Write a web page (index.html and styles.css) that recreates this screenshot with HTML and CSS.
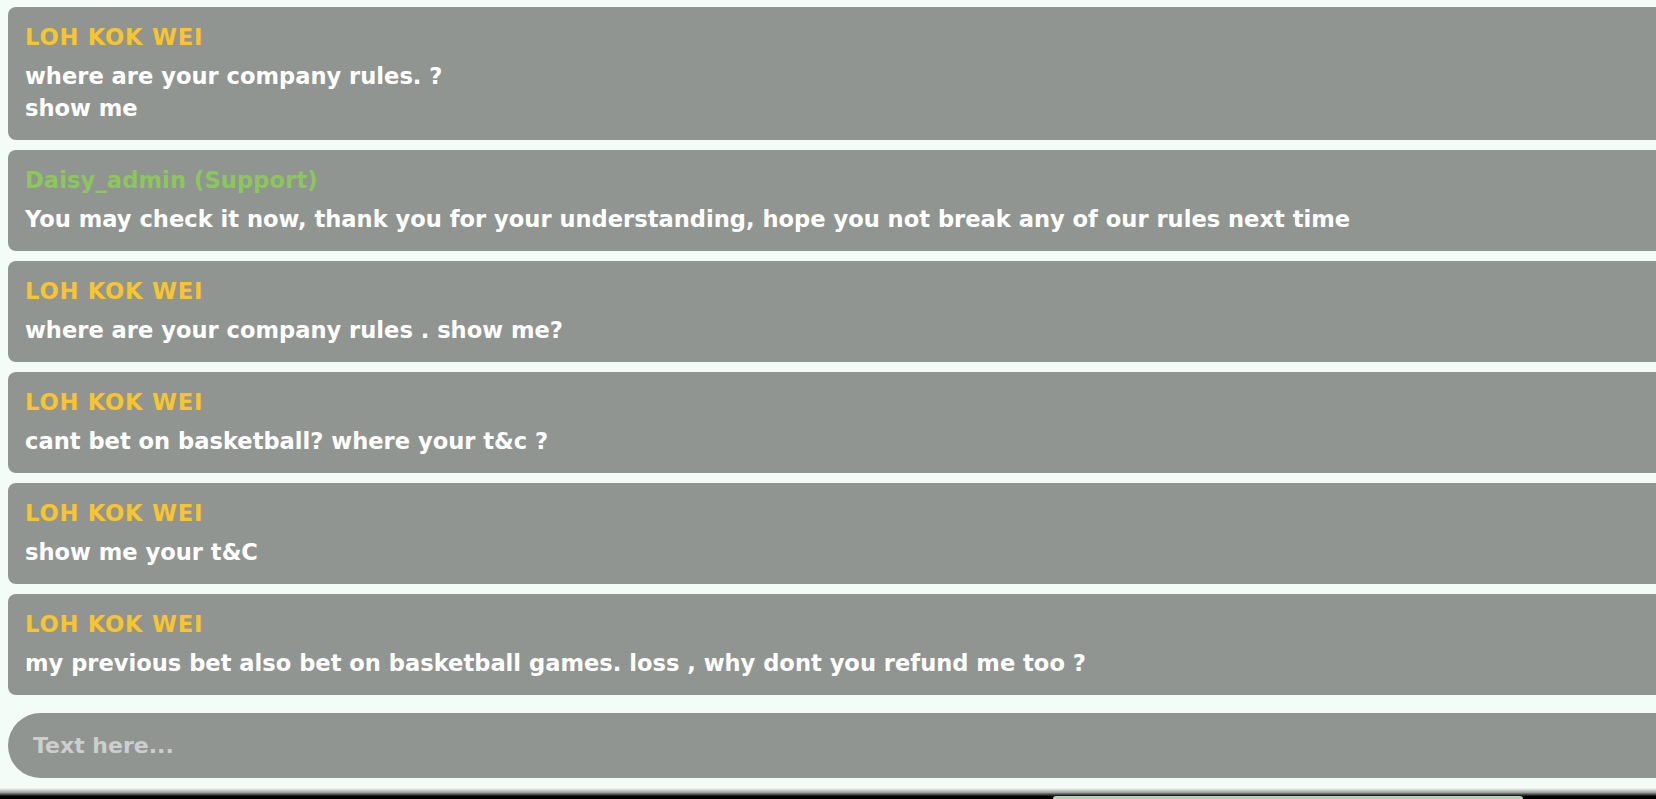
FILE: index.html
```html
<!DOCTYPE html>
<html lang="en">
<head>
<meta charset="utf-8">
<title>Chat</title>
<link rel="stylesheet" href="styles.css">
</head>
<body>
<div class="page">
  <div class="chat">
    <div class="msg">
      <div class="name user">LOH KOK WEI</div>
      <div class="text">where are your company rules. ?<br>show me</div>
    </div>
    <div class="msg">
      <div class="name admin">Daisy_admin (Support)</div>
      <div class="text">You may check it now, thank you for your understanding, hope you not break any of our rules next time</div>
    </div>
    <div class="msg">
      <div class="name user">LOH KOK WEI</div>
      <div class="text">where are your company rules . show me?</div>
    </div>
    <div class="msg">
      <div class="name user">LOH KOK WEI</div>
      <div class="text">cant bet on basketball? where your t&amp;c ?</div>
    </div>
    <div class="msg">
      <div class="name user">LOH KOK WEI</div>
      <div class="text">show me your t&amp;C</div>
    </div>
    <div class="msg">
      <div class="name user">LOH KOK WEI</div>
      <div class="text">my previous bet also bet on basketball games. loss , why dont you refund me too ?</div>
    </div>
    <div class="composer">
      <input class="input" type="text" placeholder="Text here...">
    </div>
  </div>
  <div class="bottom">
    <div class="tab"></div>
  </div>
</div>
</body>
</html>
```

FILE: styles.css
```css
* { box-sizing: border-box; }
html, body {
  margin: 0;
  padding: 0;
  overflow: hidden;
}
body {
  background: #f4fcf7;
  font-family: "DejaVu Sans", Inter, "Liberation Sans", sans-serif;
}
.page {
  height: 799px;
  display: flex;
  flex-direction: column;
  overflow: hidden;
}
.chat {
  flex: 1;
  display: flex;
  flex-direction: column;
  gap: 10px;
  padding: 7px 0 0 8px;
  width: 1700px;
}
.msg {
  background: #919592;
  border-radius: 8px;
  padding: 14px 17px 16px 17px;
}
.name {
  font-size: 22.6px;
  line-height: 32px;
  font-weight: 700;
  margin-bottom: 7px;
  letter-spacing: 0.1px;
}
.name.user { color: #f9c52a; letter-spacing: 0.8px; }
.name.admin { color: #8cc75c; }
.text {
  color: #ffffff;
  font-size: 22.6px;
  line-height: 32px;
  font-weight: 700;
}
.composer {
  margin-top: 8px;
}
.input {
  display: block;
  width: 100%;
  height: 65px;
  border: none;
  outline: none;
  background: #919592;
  border-radius: 33px 0 0 33px;
  padding: 0 25px;
  font-family: inherit;
  font-size: 22px;
  font-weight: 700;
  color: #ffffff;
}
.input::placeholder {
  color: #cdcecd;
}
.bottom {
  height: 11px;
  background: linear-gradient(to bottom, rgba(0,0,0,0) 0%, rgba(0,0,0,0.35) 40%, #000 75%, #000 100%);
  display: flex;
  align-items: flex-end;
}
.tab {
  margin-left: 1053px;
  width: 470px;
  height: 3px;
  background: #b9ceb5;
  border-radius: 6px 6px 0 0;
}
```
